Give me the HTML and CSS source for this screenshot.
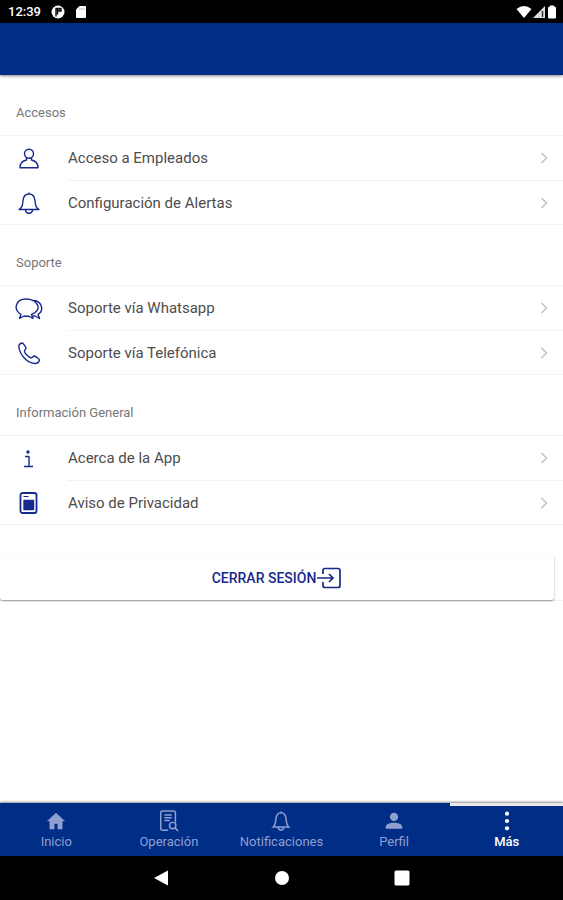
FILE: index.html
```html
<!DOCTYPE html>
<html lang="es">
<head>
<meta charset="utf-8">
<meta name="viewport" content="width=device-width, initial-scale=1">
<title>Más</title>
<link rel="stylesheet" href="styles.css">
</head>
<body>
<div class="status">
  <span class="clock">12:39</span>
  <svg class="status-app" width="14" height="14" viewBox="0 0 14 14"><circle cx="7" cy="7" r="6.500" fill="#fff"/><path d="M5 11.500V3.500h1.500v6M8 3.500h2v2.500H8z" fill="none" stroke="#000" stroke-width="1.300"/></svg>
  <svg width="12" height="14" viewBox="0 0 12 14"><path d="M4.500 1H10a1 1 0 0 1 1 1v10a1 1 0 0 1-1 1H2a1 1 0 0 1-1-1V4.500z" fill="#fff"/><path d="M5 3v2M7 3v2M9 3v2" stroke="#999" stroke-width=".7"/></svg>
  <span class="signals">
    <svg width="16" height="14" viewBox="0 0 16 14"><path d="M.5 4Q8-2 15.500 4L8 13z" fill="#fff"/></svg>
    <svg width="14" height="14" viewBox="0 0 14 14"><path d="M1 13 13 1v12z" fill="#ddd"/><path d="M10.500 6v6" stroke="#333" stroke-width="1.500"/></svg>
    <svg width="12" height="14" viewBox="0 0 12 14"><path d="M4 1h4v1.500h1.500V13h-7V2.500H4z" fill="#fff" stroke="#fff" stroke-width="1" stroke-linejoin="round"/></svg>
  </span>
</div>
<header class="appbar"></header>
<main class="content">
  <section>
    <h2 class="heading">Accesos</h2>
    <ul class="list">
      <li><a class="row" href="#empleados">
        <svg class="icon" viewBox="0 0 28 28"><circle cx="14" cy="8.800" r="4.500"/><path d="M11.500 12.500v2.500c-4 .8-6.500 3-6.500 7.800h18c0-4.800-2.500-7-6.500-7.800v-2.500"/></svg>
        <span class="label">Acceso a Empleados<svg class="chevron" viewBox="0 0 8 12"><path d="m1.500 1 5 5-5 5"/></svg></span></a></li>
      <li><a class="row" href="#alertas">
        <svg class="icon" viewBox="0 0 28 28"><path d="M4 20.500c3.500-2 3.500-4.500 4-9 .4-4 2.500-6.500 6-6.500s5.600 2.500 6 6.500c.5 4.500.5 7 4 9zM14 5V3.500M10.500 20.500c0 5 7 5 7 0"/></svg>
        <span class="label">Configuración de Alertas<svg class="chevron" viewBox="0 0 8 12"><path d="m1.500 1 5 5-5 5"/></svg></span></a></li>
    </ul>
  </section>
  <section>
    <h2 class="heading">Soporte</h2>
    <ul class="list">
      <li><a class="row" href="#whatsapp">
        <svg class="icon" viewBox="0 0 28 28"><path d="M4.500 23.500 6 19.500C-2.500 14 1 4 11 4s18.500 10 5.500 15.500l1.500 4-4.500-2.500q-2 .5-4.500 0zM17 5.500c10-.5 12.500 10 6 14l1.500 4-4.500-2.500h-2"/></svg>
        <span class="label">Soporte vía Whatsapp<svg class="chevron" viewBox="0 0 8 12"><path d="m1.500 1 5 5-5 5"/></svg></span></a></li>
      <li><a class="row" href="#telefono">
        <svg class="icon" viewBox="0 0 28 28"><path d="M7 4c-2 .5-3.500 2-3 4.500C5 16 12 23.500 19.500 24.500c2.500.3 4.500-1.500 5-3.500.1-.6-3.500-3.500-5-4-1.500-.2-2 2-3.500 1.800-2.500-.5-6-4-6.500-6.500-.2-1.500 1.500-1.800 1.500-3C11 8 8 3.800 7 4z"/></svg>
        <span class="label">Soporte vía Telefónica<svg class="chevron" viewBox="0 0 8 12"><path d="m1.500 1 5 5-5 5"/></svg></span></a></li>
    </ul>
  </section>
  <section>
    <h2 class="heading">Información General</h2>
    <ul class="list">
      <li><a class="row" href="#acerca">
        <svg class="icon" viewBox="0 0 28 28"><circle cx="13" cy="7" r="1" class="solid"/><path d="M10 11.500h4V21M9 21.500h9"/></svg>
        <span class="label">Acerca de la App<svg class="chevron" viewBox="0 0 8 12"><path d="m1.500 1 5 5-5 5"/></svg></span></a></li>
      <li><a class="row" href="#privacidad">
        <svg class="icon" viewBox="0 0 28 28"><rect x="5.500" y="4" width="16" height="20" rx="2" stroke-width="1.800"/><path class="solid" d="M9 11.500h9.500v9H9z"/><path d="M8.500 7.500h5" stroke-width="1"/></svg>
        <span class="label">Aviso de Privacidad<svg class="chevron" viewBox="0 0 8 12"><path d="m1.500 1 5 5-5 5"/></svg></span></a></li>
    </ul>
  </section>
  <div class="logout-wrap">
    <button class="logout" type="button">CERRAR SESIÓN<svg width="26" height="24" viewBox="0 0 26 24"><path d="M7 8V4.500a2 2 0 0 1 2-2h13a2 2 0 0 1 2 2v15a2 2 0 0 1-2 2H9a2 2 0 0 1-2-2V16M1 12h16M13 8l4 4-4 4"/></svg></button>
  </div>
</main>
<nav class="tabs">
  <a class="tab" href="#inicio"><svg viewBox="0 0 24 24"><path class="fill" d="M12 3 2 12.300h3V21h5.300v-6h3.400v6H19v-8.700h3z"/></svg>Inicio</a>
  <a class="tab" href="#operacion"><svg viewBox="0 0 24 24"><path d="M11 22H5a2 2 0 0 1-2-2V3a2 2 0 0 1 2-2h12a2 2 0 0 1 2 2v11M7 5.500h8M7 8.500h8M7 11.500h6M18.500 19.500 22 23"/><circle cx="16" cy="17" r="3.500"/></svg>Operación</a>
  <a class="tab" href="#notificaciones"><svg viewBox="0 0 24 24"><path d="M3.500 18.500c2.500-2 2.500-4.500 3-9C6.900 5.500 8.800 3 12 3s5.100 2.500 5.500 6.500c.5 4.500.5 7 3 9zM12 3V1.500M9 18.500c0 4.500 6 4.500 6 0"/></svg>Notificaciones</a>
  <a class="tab" href="#perfil"><svg viewBox="0 0 24 24"><path class="fill" d="M12 3a4.500 4.500 0 1 0 0 9 4.500 4.500 0 0 0 0-9zM3 20.500v-2c0-3 5-4.500 9-4.500s9 1.500 9 4.500v2z"/></svg>Perfil</a>
  <a class="tab active" href="#mas" aria-current="page"><svg viewBox="0 0 24 24"><g class="fill"><circle cx="12" cy="4" r="2.300"/><circle cx="12" cy="12" r="2.300"/><circle cx="12" cy="20" r="2.300"/></g></svg>Más</a>
</nav>
<div class="system">
  <button type="button" aria-label="Atrás"><svg viewBox="0 0 16 16"><path d="M0 8 14 .5v15z"/></svg></button>
  <button type="button" aria-label="Inicio del sistema"><svg viewBox="0 0 16 16"><circle cx="8" cy="8" r="7"/></svg></button>
  <button type="button" aria-label="Recientes"><svg viewBox="0 0 16 16"><rect x=".5" y=".5" width="15" height="15" rx="1.500"/></svg></button>
</div>
</body>
</html>
```
FILE: styles.css
```css
* { box-sizing: border-box; }

body {
  margin: 0;
  min-height: 100vh;
  display: flex;
  flex-direction: column;
  background: #fff;
  color: #4d4d4d;
  font-family: Roboto, "Liberation Sans", sans-serif;
}

a { color: inherit; text-decoration: none; }
svg { display: block; flex: none; }

.status {
  display: flex;
  align-items: center;
  gap: 10px;
  height: 23px;
  padding: 0 5px 0 8px;
  background: #000;
  color: #fff;
}
.clock { font-size: 13px; font-weight: 500; line-height: 24px; }
.signals { display: flex; margin-left: auto; }

.appbar {
  height: 52px;
  background: #002d86;
  box-shadow: 0 1px 3px rgba(0, 0, 0, .5);
}

.content { flex: 1; }

.heading {
  margin: 0;
  height: 60px;
  padding: 28px 16px 0;
  color: #777;
  font-size: 13px;
  font-weight: 400;
  line-height: 20px;
}

.list {
  margin: 0;
  padding: 0;
  list-style: none;
  border-top: 1px solid #f2f2f2;
  border-bottom: 1px solid #f2f2f2;
}
.row {
  display: flex;
  align-items: center;
  height: 45px;
  padding-left: 15px;
}
.list li:last-child .row { height: 43px; }
.icon {
  width: 28px;
  height: 28px;
  margin-right: 25px;
  fill: none;
  stroke: #17298a;
  stroke-width: 1.4;
  stroke-linejoin: round;
}
.icon .solid { fill: #17298a; }
.label {
  flex: 1;
  align-self: stretch;
  display: flex;
  align-items: center;
  justify-content: space-between;
  padding-right: 15px;
  font-size: 15px;
}
.list li:first-child .label { border-bottom: 1px solid #f2f2f2; }
.chevron {
  width: 8px;
  height: 12px;
  fill: none;
  stroke: #c4c4c4;
  stroke-width: 1.6;
}

.logout-wrap {
  margin-top: 30px;
  padding-right: 9px;
  border-bottom: 1px solid #f2f2f2;
}
.logout {
  display: flex;
  align-items: center;
  justify-content: center;
  width: 100%;
  height: 45px;
  padding: 0;
  border: 0;
  border-radius: 3px;
  background: #fff;
  box-shadow: 0 1px 2px rgba(0, 0, 0, .4);
  color: #17298a;
  font-family: inherit;
  font-size: 14px;
  font-weight: 500;
}
.logout svg { fill: none; stroke: #17298a; stroke-width: 1.7; }

.tabs {
  display: grid;
  grid-template-columns: repeat(5, 1fr);
  height: 53px;
  background: #002d86;
  box-shadow: 0 -1px 2px rgba(0, 0, 0, .45);
}
.tab {
  display: flex;
  flex-direction: column;
  align-items: center;
  gap: 2px;
  padding-top: 4px;
  border-top: 3px solid transparent;
  color: #8f9fd0;
  font-size: 13px;
  line-height: 16px;
}
.tab svg {
  width: 22px;
  height: 22px;
  fill: none;
  stroke: currentColor;
  stroke-width: 1.6;
}
.tab .fill { fill: currentColor; stroke: none; }
.tab.active { border-top-color: #e8e8e8; color: #fff; font-weight: 500; }

.system {
  display: flex;
  justify-content: center;
  gap: 104px;
  height: 44px;
  background: #000;
}
.system button {
  padding: 0;
  border: 0;
  background: none;
}
.system svg { width: 16px; height: 16px; fill: #fff; }
```
